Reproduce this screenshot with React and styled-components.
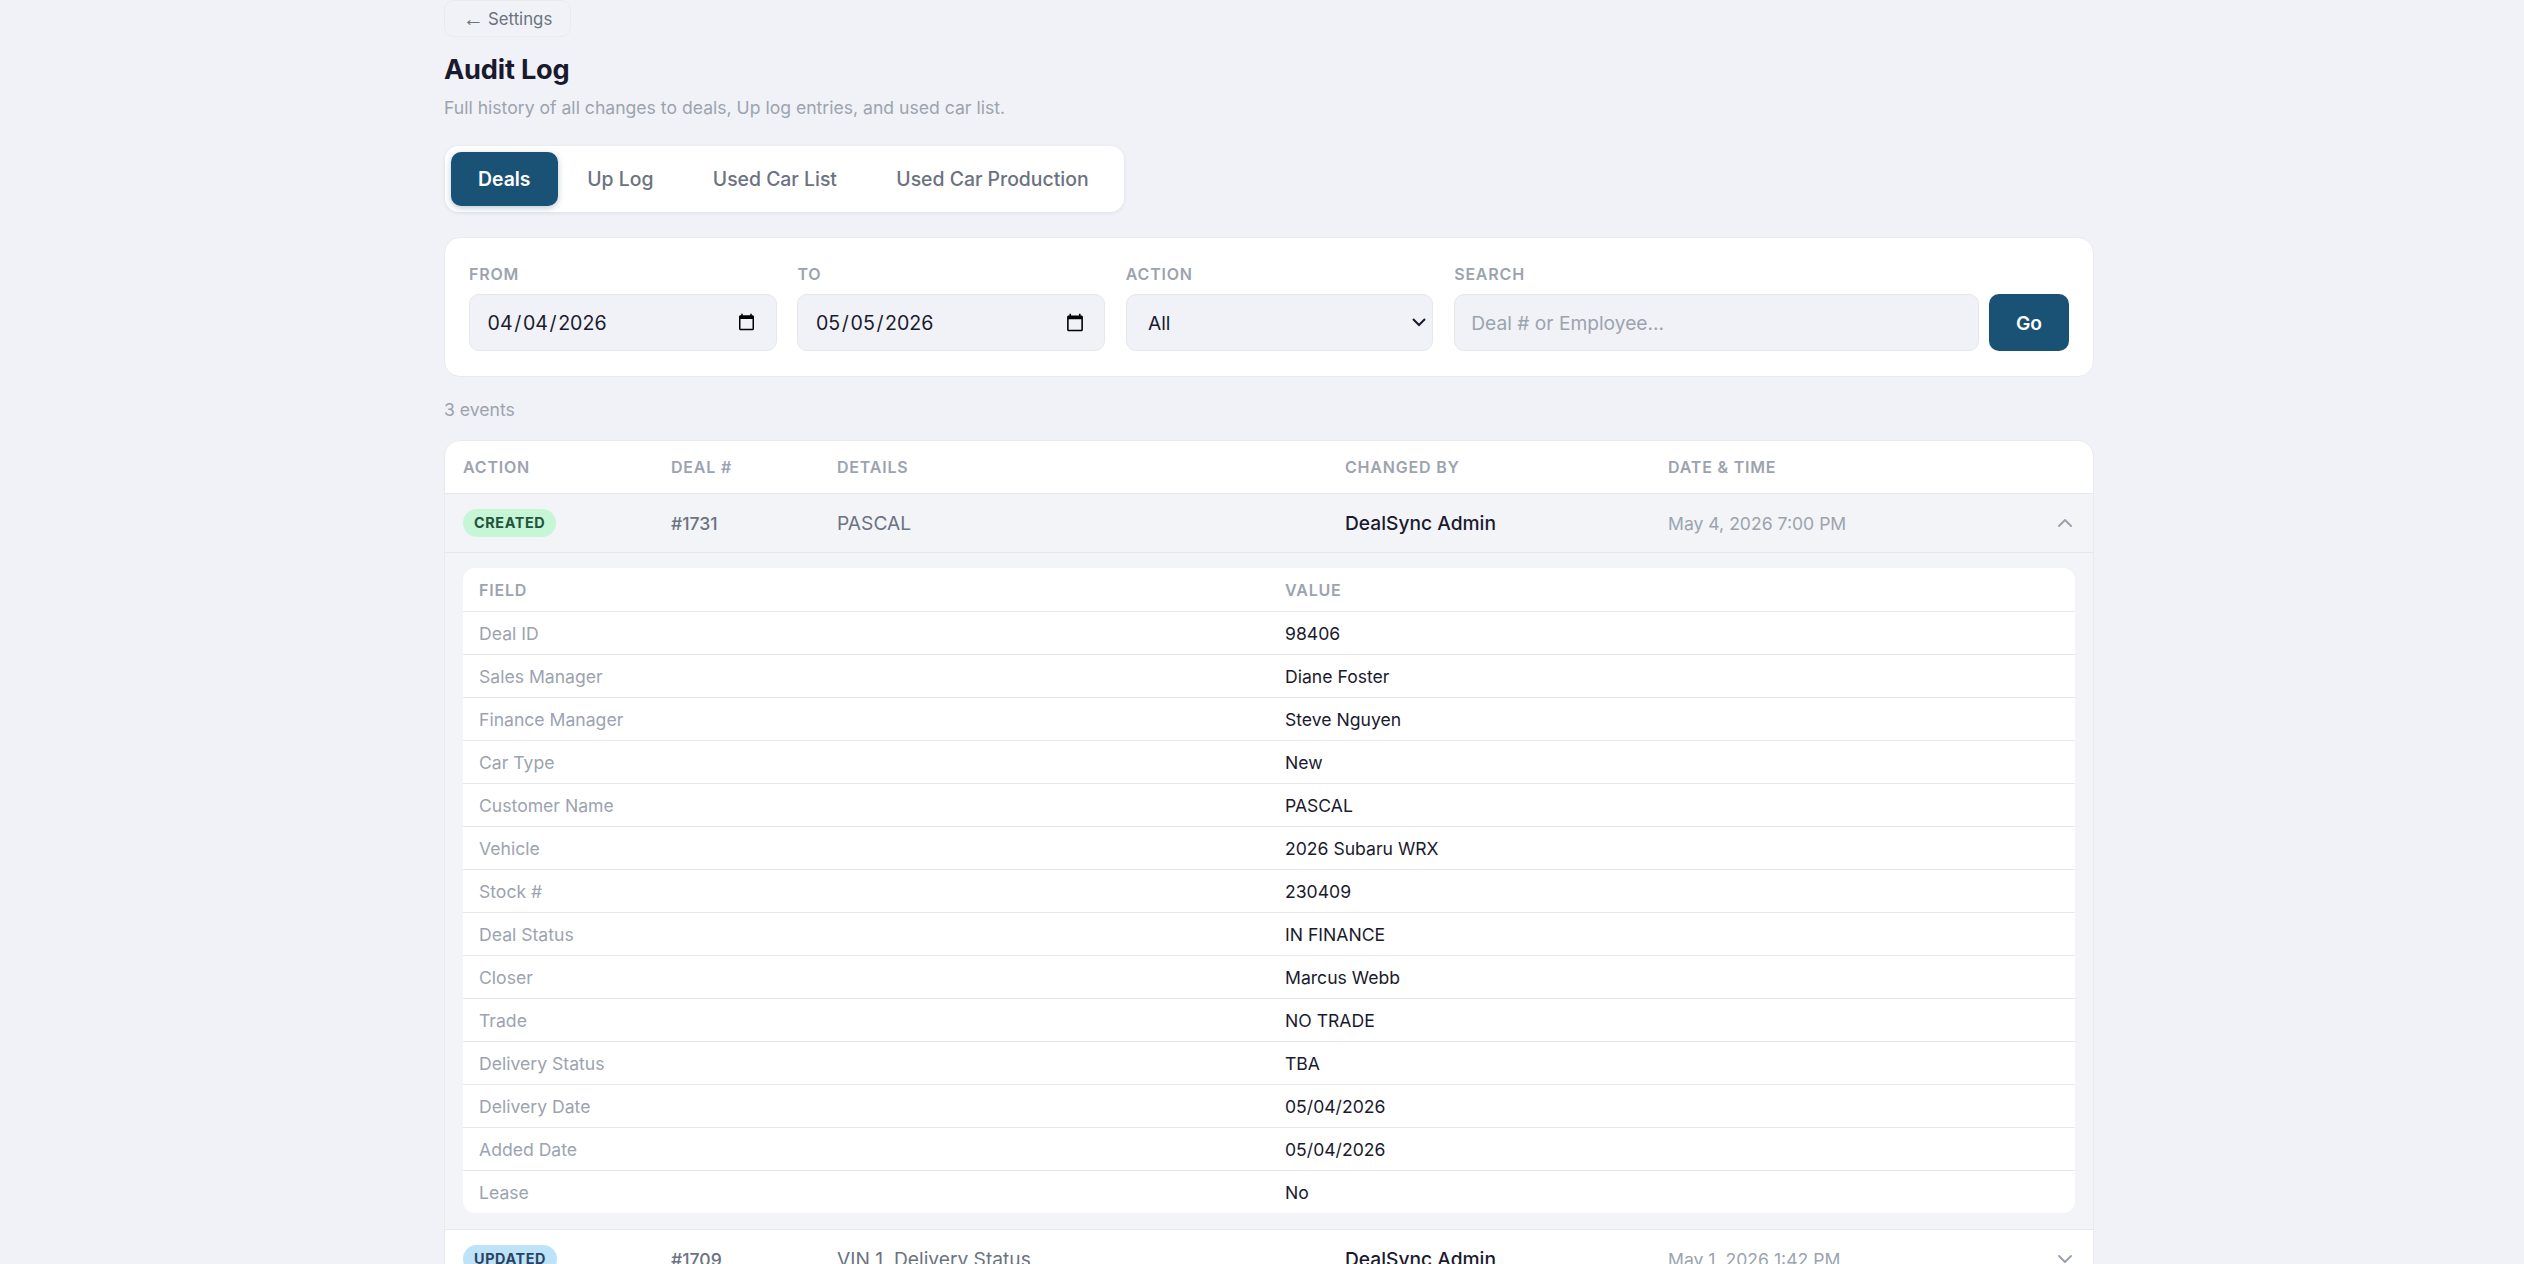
import styled, { createGlobalStyle } from "styled-components";
import { ChevronUp, ChevronDown } from "lucide-react";

const GlobalStyle = createGlobalStyle`
  html, body {
    margin: 0;
    height: 100%;
    overflow: hidden;
    background: #f0f2f7;
    font-family: Inter, "Noto Sans", sans-serif;
    color: #1a1a2e;
  }
  * { box-sizing: border-box; }
`;

const Page = styled.div`
  padding: 0 430px 0 444px;
`;

const BackLink = styled.a`
  display: inline-flex;
  align-items: center;
  gap: 4px;
  height: 37px;
  padding: 0 18px;
  font-size: 16.8px;
  color: #6b7280;
  background: #f0f2f7;
  border: 1px solid #e8eaef;
  border-radius: 10px;
`;

const Arrow = styled.span`
  font-family: "Liberation Sans", sans-serif;
  font-size: 21px;
  line-height: 1;
`;

const Title = styled.h1`
  margin: 17px 0 0;
  font-size: 27.2px;
  line-height: 32px;
  font-weight: 700;
  letter-spacing: -0.2px;
`;

const Subtitle = styled.p`
  margin: 10px 0 0;
  font-size: 17.6px;
  line-height: 24px;
  color: #9ca3af;
`;

const Tabs = styled.div`
  display: flex;
  width: fit-content;
  margin: 26px 0 0 1px;
  padding: 6px;
  background: #fff;
  border-radius: 14px;
  box-shadow: 0 1px 4px rgba(0, 0, 0, 0.08);
`;

const Tab = styled.button`
  height: 54px;
  padding: 0 ${(p) => (p.$active ? "27px" : "29.7px")};
  font: ${(p) => (p.$active ? 600 : 500)} 19.4px Inter, sans-serif;
  color: ${(p) => (p.$active ? "#fff" : "#6b7280")};
  background: ${(p) => (p.$active ? "#1a5276" : "transparent")};
  border: 0;
  border-radius: 10px;
  box-shadow: ${(p) => (p.$active ? "0 2px 6px rgba(26, 82, 118, 0.3)" : "none")};
`;

const Card = styled.div`
  background: #fff;
  border: 1px solid #e8eaef;
  border-radius: 16px;
`;

const FilterCard = styled(Card)`
  display: grid;
  grid-template-columns: 307.6px 307.6px 307.6px 1fr;
  gap: 20.8px;
  align-items: end;
  margin-top: 25px;
  height: 140px;
  padding: 24px 24px 25px;
`;

const Field = styled.label`
  display: flex;
  flex-direction: column;
  gap: 10px;
`;

const FieldLabel = styled.span`
  font-size: 16px;
  line-height: 20px;
  font-weight: 600;
  letter-spacing: 0.8px;
  color: #9ca3af;
  text-transform: uppercase;
`;

// date and select controls are zoomed so the native icon and arrow scale with the page
const zoomedControl = `
  zoom: 1.6;
  width: 100%;
  height: 35.625px;
  color: #1a1a2e;
  background: #f0f2f7;
  border: 1px solid #e5e7eb;
  border-radius: 6.25px;
  outline: none;
`;

const DateInput = styled.input`
  ${zoomedControl}
  padding: 0 10px;
  font: 400 12.25px Inter, sans-serif;
`;

const Select = styled.select`
  ${zoomedControl}
  padding: 0 9.5px;
  font: 400 12px Inter, sans-serif;
`;

const SearchRow = styled.div`
  display: flex;
  gap: 10px;
`;

const SearchInput = styled.input`
  flex: 1;
  min-width: 0;
  height: 57px;
  padding: 0 16px;
  font: 400 19.2px Inter, sans-serif;
  color: #1a1a2e;
  background: #f0f2f7;
  border: 1px solid #e5e7eb;
  border-radius: 10px;
  outline: none;
  &::placeholder {
    color: #9ca3af;
  }
`;

const GoButton = styled.button`
  flex: none;
  width: 80px;
  height: 57px;
  font: 600 19.2px Inter, sans-serif;
  color: #fff;
  background: #1a5276;
  border: 0;
  border-radius: 10px;
`;

const EventCount = styled.div`
  margin-top: 20px;
  font-size: 17.6px;
  line-height: 26px;
  color: #9ca3af;
`;

const LogTable = styled(Card)`
  margin-top: 17px;
  overflow: hidden;
`;

const columns = "208px 166px 508px 323px 1fr 56px";

const HeadRow = styled.div`
  display: grid;
  grid-template-columns: ${columns};
  align-items: center;
  height: 53px;
  padding-left: 18px;
  border-bottom: 1px solid #e5e7eb;
`;

const HeadCell = styled.span`
  font-size: 16px;
  font-weight: 600;
  letter-spacing: 0.8px;
  color: #9ca3af;
`;

const EventRow = styled.div`
  display: grid;
  grid-template-columns: ${columns};
  align-items: center;
  height: 59px;
  padding-left: 18px;
  background: ${(p) => (p.$open ? "#f2f4f8" : "#fff")};
  border-bottom: 1px solid #e5e7eb;
`;

const Pill = styled.span`
  justify-self: start;
  padding: 5px 11px;
  font-size: 14.4px;
  line-height: 18px;
  font-weight: 700;
  letter-spacing: 0.6px;
  border-radius: 999px;
  color: ${(p) => (p.$kind === "created" ? "#22543d" : "#2a4365")};
  background: ${(p) => (p.$kind === "created" ? "#c6f6d5" : "#bee3f8")};
`;

const DealNo = styled.span`
  font-size: 17.6px;
  font-weight: 500;
  color: #6b7280;
`;

const Details = styled.span`
  font-size: 19.2px;
  color: #6b7280;
`;

const ChangedBy = styled.span`
  font-size: 19.2px;
  font-weight: 500;
  color: #1a1a2e;
`;

const When = styled.span`
  font-size: 17.6px;
  color: #9ca3af;
`;

const Chevron = styled.span`
  display: flex;
  justify-content: center;
  color: #9ca3af;
`;

const DetailPanel = styled.div`
  padding: 15px 18px 16px;
  background: #f2f4f8;
  border-bottom: 1px solid #e5e7eb;
`;

const DetailCard = styled.div`
  background: #fff;
  border-radius: 12px;
  overflow: hidden;
`;

const DetailRow = styled.div`
  display: grid;
  grid-template-columns: 806px 1fr;
  align-items: center;
  height: 43px;
  padding: 0 16px;
  border-top: ${(p) => (p.$first ? "none" : "1px solid #e5e7eb")};
`;

const DetailHead = styled.span`
  font-size: 16px;
  font-weight: 600;
  letter-spacing: 0.8px;
  color: #9ca3af;
`;

const DetailLabel = styled.span`
  font-size: 17.6px;
  color: #9ca3af;
`;

const DetailValue = styled.span`
  font-size: 17.6px;
  color: #1a1a2e;
`;

const fields = [
  ["Deal ID", "98406"],
  ["Sales Manager", "Diane Foster"],
  ["Finance Manager", "Steve Nguyen"],
  ["Car Type", "New"],
  ["Customer Name", "PASCAL"],
  ["Vehicle", "2026 Subaru WRX"],
  ["Stock #", "230409"],
  ["Deal Status", "IN FINANCE"],
  ["Closer", "Marcus Webb"],
  ["Trade", "NO TRADE"],
  ["Delivery Status", "TBA"],
  ["Delivery Date", "05/04/2026"],
  ["Added Date", "05/04/2026"],
  ["Lease", "No"],
];

export default function App() {
  return (
    <Page>
      <GlobalStyle />
      <BackLink><Arrow>←</Arrow> Settings</BackLink>
      <Title>Audit Log</Title>
      <Subtitle>Full history of all changes to deals, Up log entries, and used car list.</Subtitle>

      <Tabs>
        <Tab $active>Deals</Tab>
        <Tab>Up Log</Tab>
        <Tab>Used Car List</Tab>
        <Tab>Used Car Production</Tab>
      </Tabs>

      <FilterCard>
        <Field>
          <FieldLabel>From</FieldLabel>
          <DateInput type="date" defaultValue="2026-04-04" />
        </Field>
        <Field>
          <FieldLabel>To</FieldLabel>
          <DateInput type="date" defaultValue="2026-05-05" />
        </Field>
        <Field>
          <FieldLabel>Action</FieldLabel>
          <Select defaultValue="All">
            <option>All</option>
            <option>Created</option>
            <option>Updated</option>
          </Select>
        </Field>
        <Field>
          <FieldLabel>Search</FieldLabel>
          <SearchRow>
            <SearchInput placeholder="Deal # or Employee..." />
            <GoButton>Go</GoButton>
          </SearchRow>
        </Field>
      </FilterCard>

      <EventCount>3 events</EventCount>

      <LogTable>
        <HeadRow>
          <HeadCell>ACTION</HeadCell>
          <HeadCell>DEAL #</HeadCell>
          <HeadCell>DETAILS</HeadCell>
          <HeadCell>CHANGED BY</HeadCell>
          <HeadCell>DATE &amp; TIME</HeadCell>
        </HeadRow>

        <EventRow $open>
          <Pill $kind="created">CREATED</Pill>
          <DealNo>#1731</DealNo>
          <Details>PASCAL</Details>
          <ChangedBy>DealSync Admin</ChangedBy>
          <When>May 4, 2026 7:00 PM</When>
          <Chevron><ChevronUp size={24} /></Chevron>
        </EventRow>

        <DetailPanel>
          <DetailCard>
            <DetailRow $first>
              <DetailHead>FIELD</DetailHead>
              <DetailHead>VALUE</DetailHead>
            </DetailRow>
            {fields.map(([label, value]) => (
              <DetailRow key={label}>
                <DetailLabel>{label}</DetailLabel>
                <DetailValue>{value}</DetailValue>
              </DetailRow>
            ))}
          </DetailCard>
        </DetailPanel>

        <EventRow>
          <Pill $kind="updated">UPDATED</Pill>
          <DealNo>#1709</DealNo>
          <Details>VIN 1, Delivery Status</Details>
          <ChangedBy>DealSync Admin</ChangedBy>
          <When>May 1, 2026 1:42 PM</When>
          <Chevron><ChevronDown size={24} /></Chevron>
        </EventRow>
      </LogTable>
    </Page>
  );
}
